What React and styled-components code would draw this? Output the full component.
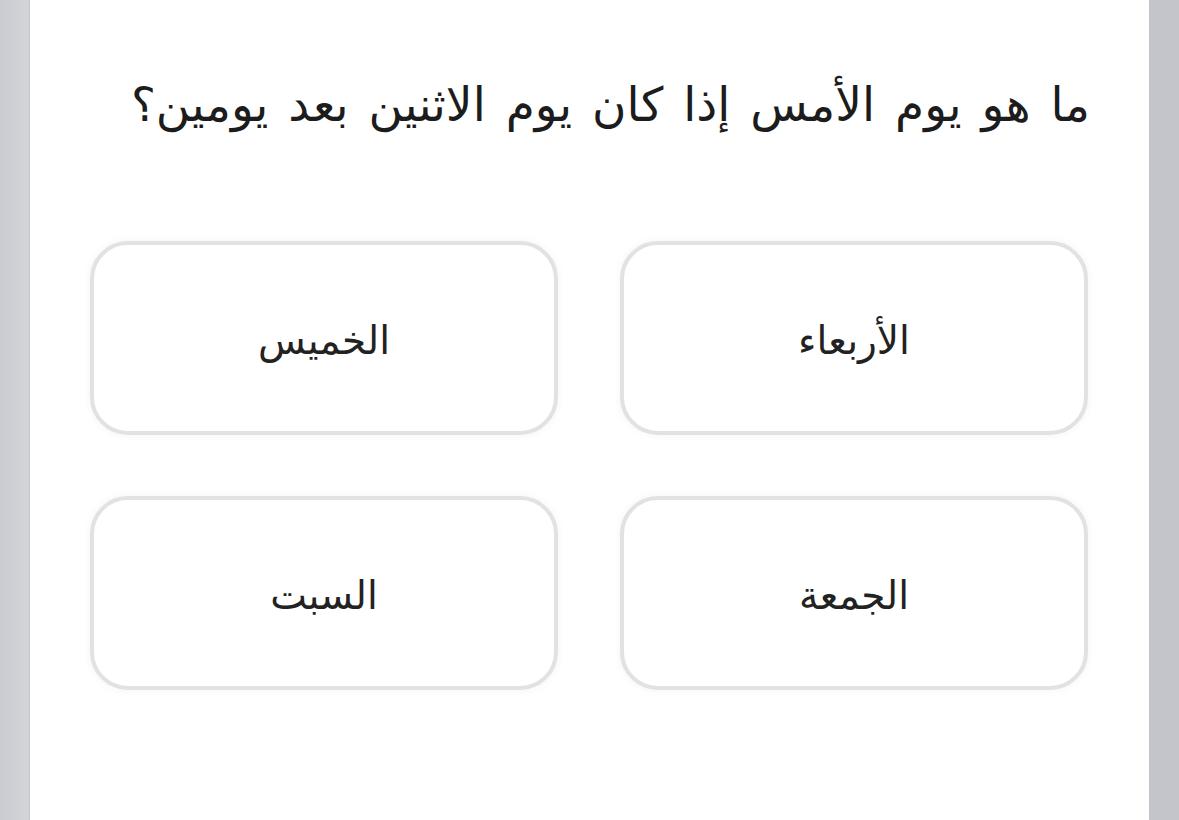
import React from 'react';
import styled, { createGlobalStyle } from 'styled-components';

const GlobalStyle = createGlobalStyle`
  html, body {
    margin: 0;
    padding: 0;
    background: #cfd0d4;
  }
  body {
    font-family: "DejaVu Sans", "Noto Sans", sans-serif;
  }
`;

const Page = styled.div`
  height: 820px;
  overflow: hidden;
  padding: 0 30px;
  background: linear-gradient(to right, #cbccd1, #d3d4d8 28px, #c4c5ca 30px);
  box-sizing: border-box;
`;

const Card = styled.div`
  background: #fff;
  height: 100%;
  direction: rtl;
  box-sizing: border-box;
  padding: 72px 61px 0 60px;
`;

const Question = styled.h1`
  margin: 0 -2px 0 0;
  font-size: 47px;
  font-weight: 400;
  color: #1c1c1c;
  line-height: 66px;
  word-spacing: 5px;
  text-align: right;
`;

const Options = styled.div`
  display: grid;
  grid-template-columns: 468px 468px;
  grid-auto-rows: 194px;
  column-gap: 62px;
  row-gap: 61px;
  margin-top: 103px;
`;

const Option = styled.button`
  all: unset;
  box-sizing: border-box;
  display: flex;
  align-items: center;
  justify-content: center;
  border: 4px solid #e2e2e2;
  border-radius: 38px;
  background: #fff;
  box-shadow: 0 0 8px rgba(0, 0, 0, 0.05);
  font-family: "DejaVu Sans", sans-serif;
  font-size: 39px;
  color: #222;
  cursor: pointer;
  padding-top: 4px;
`;

const answers = ['الأربعاء', 'الخميس', 'الجمعة', 'السبت'];

export default function App() {
  return (
    <>
      <GlobalStyle />
      <Page>
        <Card>
          <Question>ما هو يوم الأمس إذا كان يوم الاثنين بعد يومين؟</Question>
          <Options>
            {answers.map((a) => (
              <Option key={a}>{a}</Option>
            ))}
          </Options>
        </Card>
      </Page>
    </>
  );
}
